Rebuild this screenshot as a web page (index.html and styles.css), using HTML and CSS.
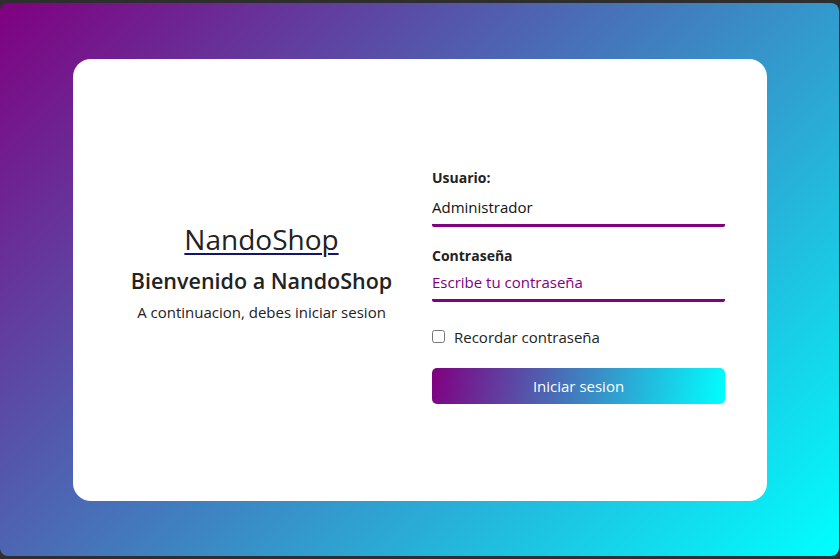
FILE: index.html
```html
<!DOCTYPE html>
<html lang="es">
<head>
<meta charset="utf-8">
<title>NandoShop - Login</title>
<link rel="stylesheet" href="styles.css">
</head>
<body>
<div class="frame">
  <main class="card">
    <section class="brand">
      <h1 class="brand-title"><a href="#" class="brand-link">NandoShop</a></h1>
      <h2 class="brand-sub">Bienvenido a NandoShop</h2>
      <p class="brand-text">A continuacion, debes iniciar sesion</p>
    </section>
    <form class="login">
      <label class="field-label first" for="user">Usuario:</label>
      <input class="field-input" id="user" type="text" value="Administrador">
      <label class="field-label second" for="pass">Contraseña</label>
      <input class="field-input" id="pass" type="password" placeholder="Escribe tu contraseña">
      <label class="remember"><input type="checkbox" class="remember-box"> <span>Recordar contraseña</span></label>
      <button type="button" class="submit">Iniciar sesion</button>
    </form>
  </main>
</div>
</body>
</html>
```

FILE: styles.css
```css
* { box-sizing: border-box; }
html, body { margin: 0; padding: 0; }
body {
  background: #2e2e2e;
  width: 840px;
  height: 559px;
  overflow: hidden;
  font-family: "Open Sans", "Noto Sans", sans-serif;
  color: #222;
}
.frame {
  margin-top: 3px;
  height: 553px;
  width: 839px;
  border-radius: 8px;
  background: linear-gradient(135deg, #800080 0%, #00ffff 100%);
  display: flex;
  align-items: center;
  justify-content: center;
  padding-left: 1px;
}
.card {
  width: 694px;
  height: 442px;
  background: #fff;
  border-radius: 18px;
  display: grid;
  grid-template-columns: 293px 293px;
  column-gap: 24px;
  padding: 0 42px;
  align-items: center;
}
.brand {
  text-align: center;
  margin-top: -17px;
}
.brand-title {
  margin: 0 0 7px;
  font-size: 28px;
  font-weight: 400;
  line-height: 38px;
}
.brand-link {
  color: #222;
  text-decoration: underline;
  text-decoration-color: #14146e;
  text-decoration-thickness: 2px;
  text-underline-offset: 3px;
}
.brand-sub {
  margin: 0;
  font-size: 21.5px;
  font-weight: 600;
  line-height: 32px;
}
.brand-text {
  margin: 4px 0 0;
  font-size: 15px;
  line-height: 22px;
}
.login {
  display: flex;
  flex-direction: column;
  align-self: start;
  margin-top: 109px;
}
.field-label {
  font-size: 14px;
  font-weight: 700;
  line-height: 20px;
}
.field-label.first { margin-bottom: 3px; }
.field-label.second { margin-top: 19px; }
.field-input {
  border: none;
  border-bottom: 3px solid #800080;
  border-radius: 2px;
  outline: none;
  font: inherit;
  font-size: 15px;
  padding: 6px 0 6px;
  color: #111;
  background: transparent;
  line-height: 21px;
}
.field-input::placeholder { color: #800080; opacity: 1; }
.remember {
  margin-top: 24px;
  display: flex;
  align-items: center;
  gap: 9px;
  font-size: 15px;
  line-height: 22px;
}
.remember-box {
  margin: 0;
  width: 13px;
  height: 13px;
}
.submit {
  margin-top: 20px;
  height: 36px;
  border: none;
  border-radius: 5px;
  background: linear-gradient(100deg, #800080 0%, #00ffff 100%);
  color: #fff;
  font: inherit;
  font-size: 15px;
  cursor: pointer;
}
```
